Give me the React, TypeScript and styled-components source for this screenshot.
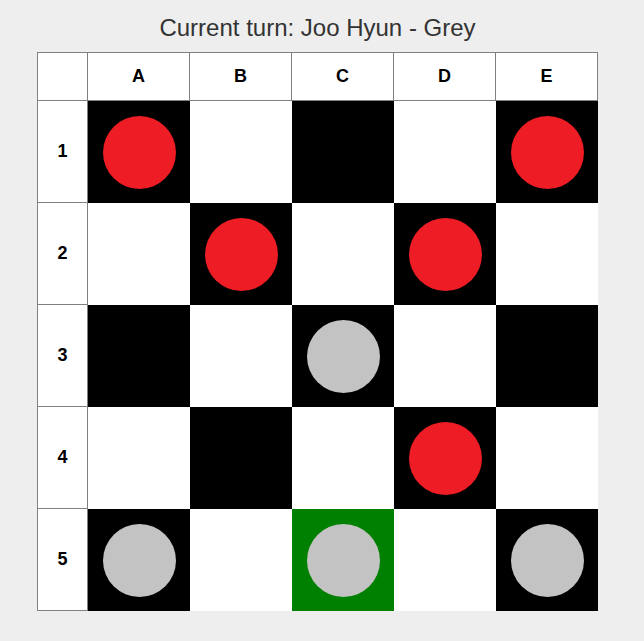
import React from 'react'
import styled, { createGlobalStyle } from 'styled-components'

type Piece = 'red' | 'grey' | null

const GlobalStyle = createGlobalStyle`
  html, body {
    margin: 0;
    padding: 0;
    background: #eeeeee;
    font-family: "Liberation Sans", Arial, sans-serif;
  }
`

const Page = styled.div`
  width: 635px;
  display: flex;
  flex-direction: column;
  align-items: center;
`

const Title = styled.h1`
  margin: 14px 0 0;
  height: 38px;
  font-size: 24px;
  font-weight: normal;
  line-height: 28px;
  color: #333333;
`

const Board = styled.div`
  display: grid;
  grid-template-columns: 51px repeat(5, 102px);
  grid-template-rows: 49px repeat(5, 102px);
`

const Label = styled.div<{ $first?: boolean; $top?: boolean }>`
  box-sizing: border-box;
  display: flex;
  align-items: center;
  justify-content: center;
  background: #ffffff;
  border: 1px solid #808080;
  border-left-width: ${p => (p.$first ? '1px' : '0')};
  border-top-width: ${p => (p.$top ? '1px' : '0')};
  font-size: 18px;
  font-weight: bold;
  color: #000000;
`

const Square = styled.div<{ $dark: boolean; $selected?: boolean }>`
  display: flex;
  align-items: center;
  justify-content: center;
  background: ${p => (p.$selected ? '#008000' : p.$dark ? '#000000' : '#ffffff')};
`

const Disc = styled.div<{ $color: 'red' | 'grey' }>`
  width: 73px;
  height: 73px;
  border-radius: 50%;
  background: ${p => (p.$color === 'red' ? '#ee1c24' : '#c3c3c3')};
`

const cols = ['A', 'B', 'C', 'D', 'E']

const layout: Piece[][] = [
  ['red', null, null, null, 'red'],
  [null, 'red', null, 'red', null],
  [null, null, 'grey', null, null],
  [null, null, null, 'red', null],
  ['grey', null, 'grey', null, 'grey'],
]

export default function App() {
  return (
    <>
      <GlobalStyle />
      <Page>
        <Title>Current turn: Joo Hyun - Grey</Title>
        <Board>
          <Label $first $top />
          {cols.map(c => (
            <Label key={c} $top>{c}</Label>
          ))}
          {layout.map((row, r) => (
            <React.Fragment key={r}>
              <Label $first>{r + 1}</Label>
              {row.map((piece, c) => (
                <Square key={c} $dark={(r + c) % 2 === 0} $selected={r === 4 && c === 2}>
                  {piece && <Disc $color={piece} />}
                </Square>
              ))}
            </React.Fragment>
          ))}
        </Board>
      </Page>
    </>
  )
}
